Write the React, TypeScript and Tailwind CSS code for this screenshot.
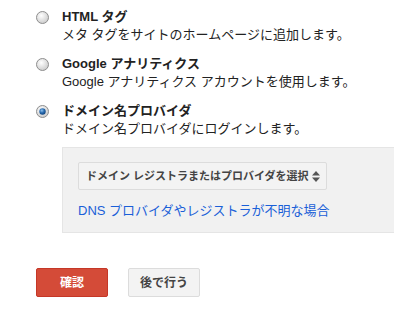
import React from "react"

const font = { fontFamily: '"Liberation Sans", Arial, "Noto Sans CJK JP", sans-serif' }

function Radio({ checked }: { checked?: boolean }) {
  return (
    <svg width="13" height="13" viewBox="0 0 13 13" className="shrink-0">
      <defs>
        <radialGradient id={checked ? "rg1" : "rg0"} cx="40%" cy="35%" r="70%">
          <stop offset="0" stopColor="#ffffff" />
          <stop offset="1" stopColor="#c9c9c9" />
        </radialGradient>
        <radialGradient id="dot" cx="40%" cy="35%" r="70%">
          <stop offset="0" stopColor="#8fc3f0" />
          <stop offset="0.5" stopColor="#2b6cb0" />
          <stop offset="1" stopColor="#0b3f7a" />
        </radialGradient>
      </defs>
      <circle cx="6.5" cy="6.5" r="6" fill={checked ? "url(#rg1)" : "url(#rg0)"} stroke="#8e8e8e" strokeWidth="1" />
      {checked && <circle cx="6.5" cy="6.5" r="3.2" fill="url(#dot)" />}
    </svg>
  )
}

function Option({ title, desc, checked }: { title: string; desc: string; checked?: boolean }) {
  return (
    <div className="flex items-start gap-[13px]">
      <div className="h-[18px] flex items-center">
        <Radio checked={checked} />
      </div>
      <div className="text-[13px] leading-[18px] text-[#222]">
        <div className="font-bold">{title}</div>
        <div>{desc}</div>
      </div>
    </div>
  )
}

export default function App() {
  return (
    <div className="w-[394px] h-[315px] bg-white overflow-hidden pt-[8px] pl-[36px]" style={font}>
      <div className="flex flex-col gap-[11px]">
        <Option title="HTML タグ" desc="メタ タグをサイトのホームページに追加します。" />
        <Option title="Google アナリティクス" desc="Google アナリティクス アカウントを使用します。" />
        <Option title="ドメイン名プロバイダ" desc="ドメイン名プロバイダにログインします。" checked />
      </div>
      <div className="ml-[26px] mt-[9px] w-[360px] h-[86px] bg-[#f1f1f1] border border-[#e5e5e5] pt-[14px] pl-[15px]">
        <div className="w-[249px] h-[28px] bg-[#f3f3f3] border border-[#dcdcdc] rounded-[2px] flex items-center justify-between pl-[7px] pr-[6px] text-[11px] font-bold text-[#444] whitespace-nowrap">
          <span>ドメイン レジストラまたはプロバイダを選択</span>
          <svg width="8" height="11" viewBox="0 0 8 11">
            <path d="M4 0 L8 4.5 H0 Z" fill="#555" />
            <path d="M4 11 L8 6.5 H0 Z" fill="#555" />
          </svg>
        </div>
        <div className="mt-[12px] text-[13px] leading-[18px] text-[#1a5fd8]">DNS プロバイダやレジストラが不明な場合</div>
      </div>
      <div className="flex gap-[20px] mt-[35px]">
        <button className="w-[72px] h-[29px] rounded-[2px] bg-[#d44b38] border border-[#c53727] text-white text-[12px] font-bold">確認</button>
        <button className="w-[72px] h-[29px] rounded-[2px] bg-[#f3f3f3] border border-[#dcdcdc] text-[#444] text-[12px] font-bold">後で行う</button>
      </div>
    </div>
  )
}
